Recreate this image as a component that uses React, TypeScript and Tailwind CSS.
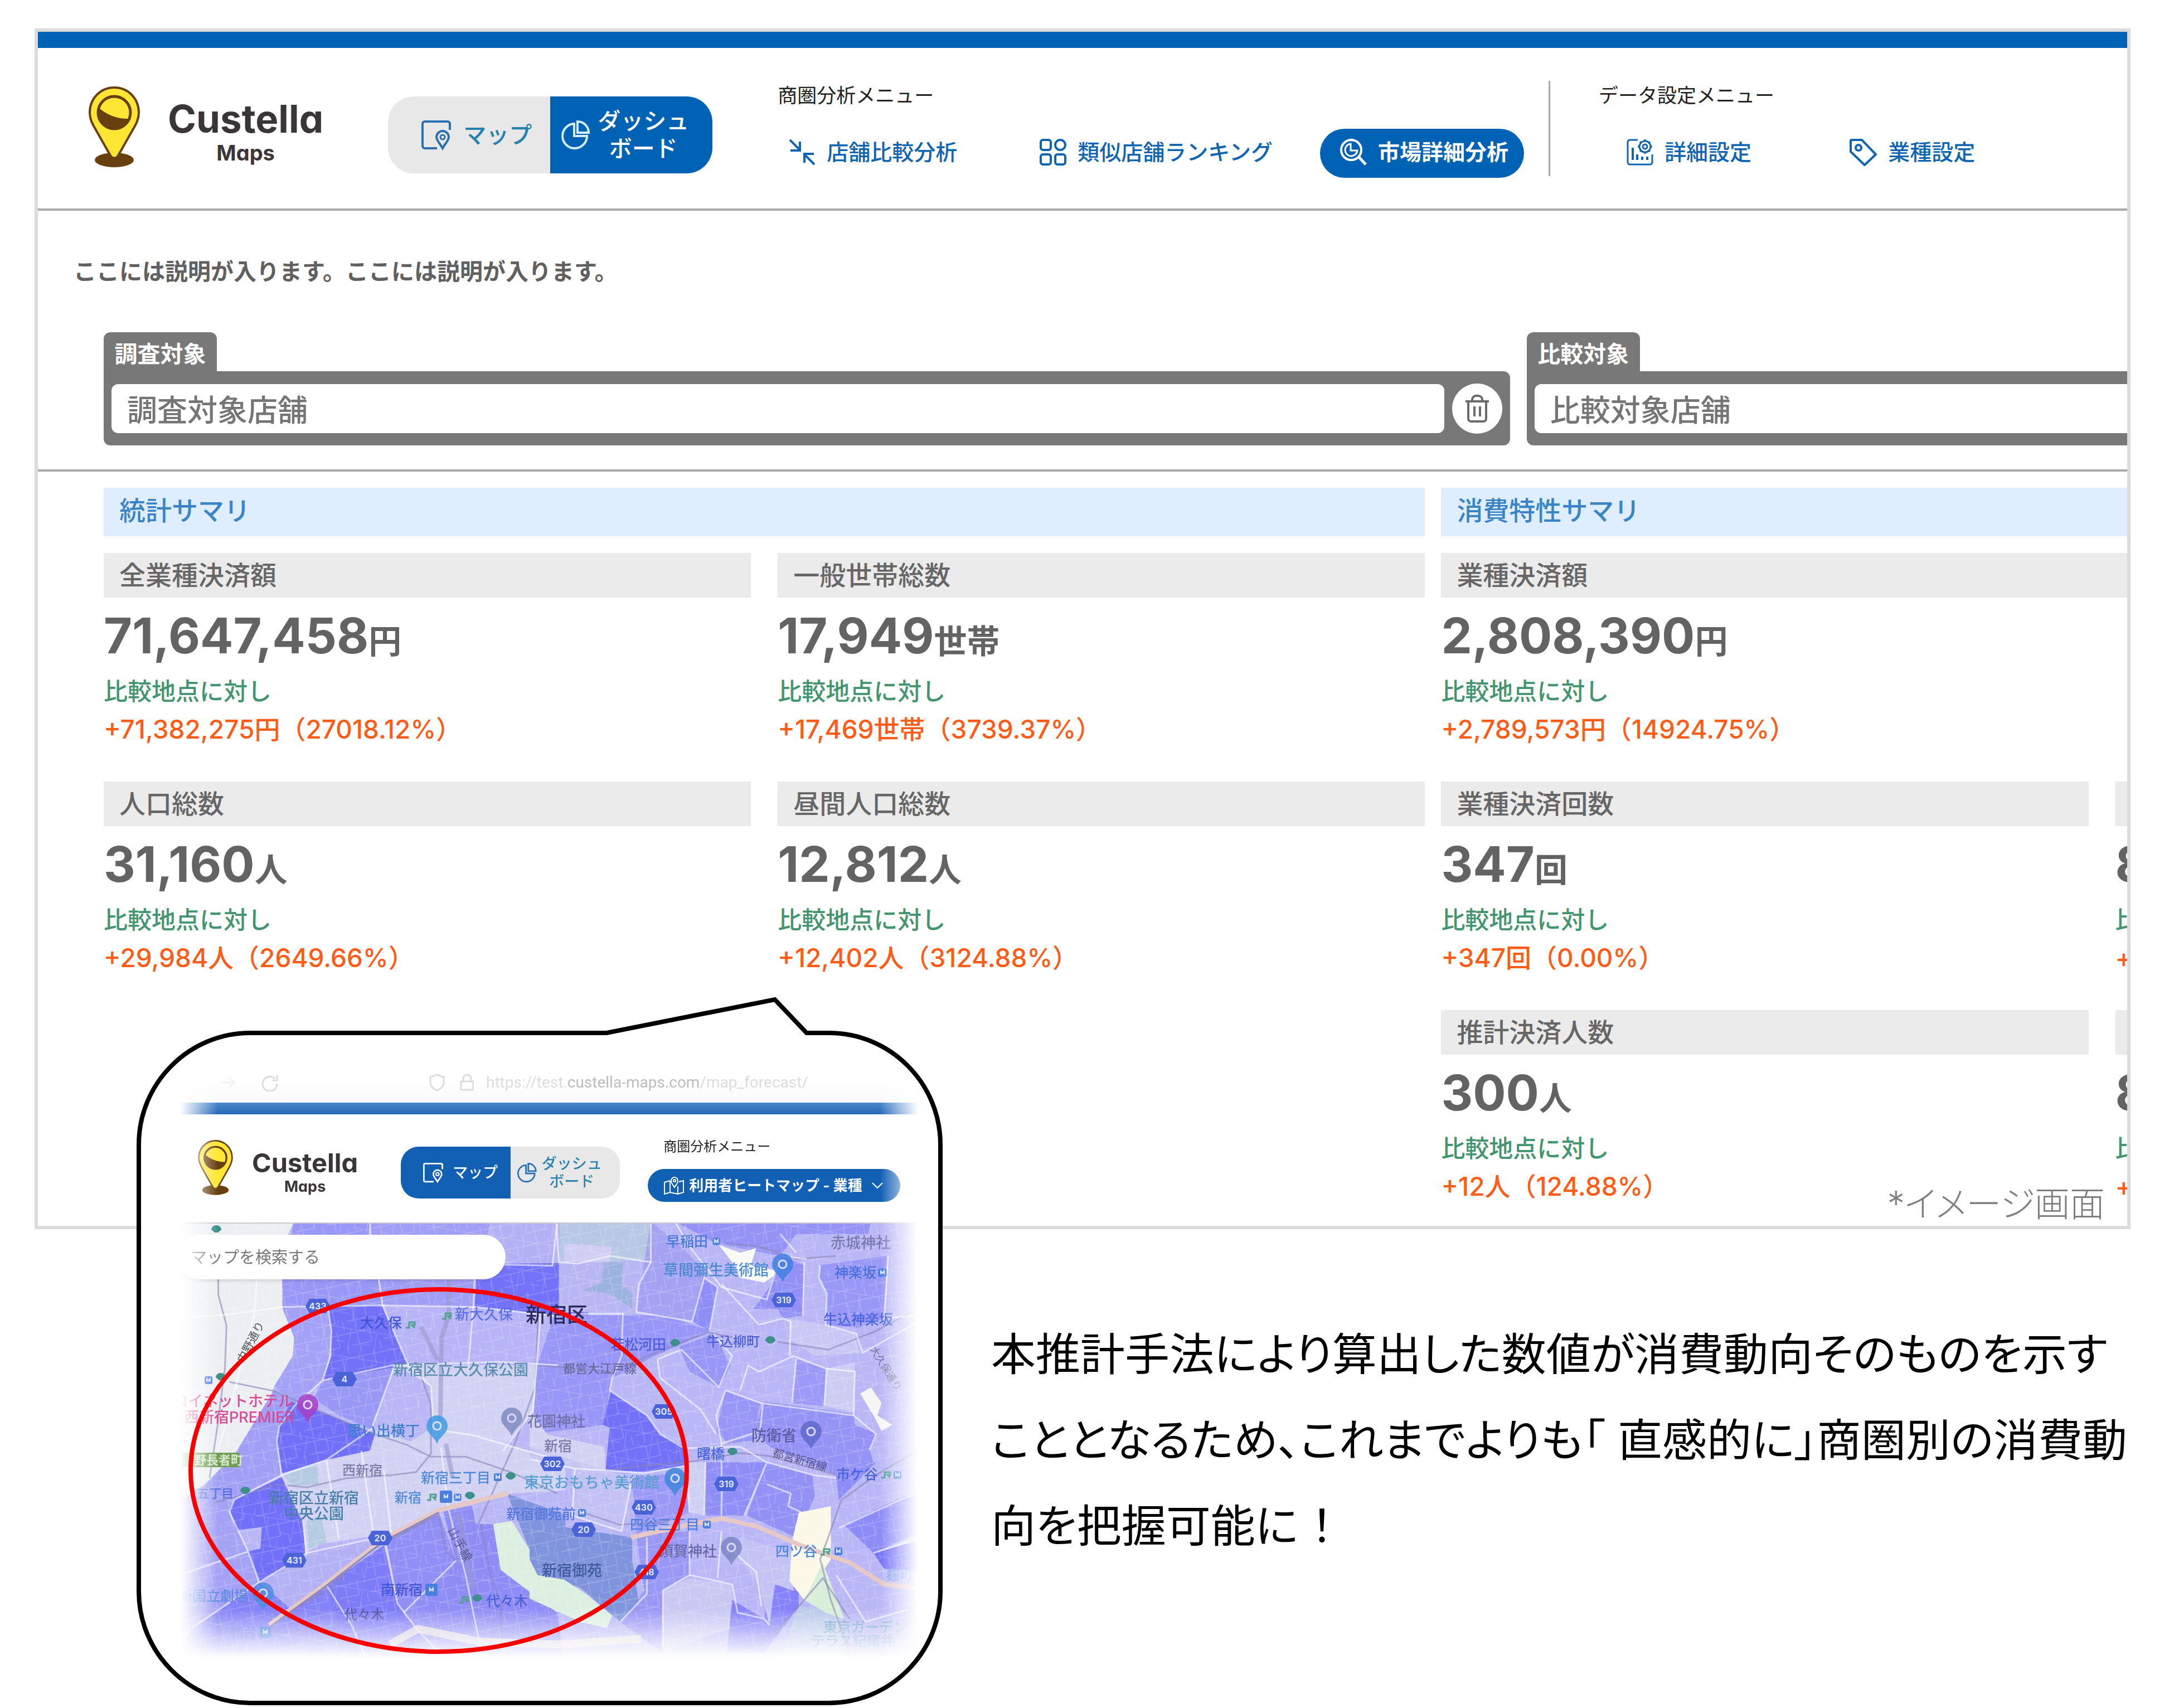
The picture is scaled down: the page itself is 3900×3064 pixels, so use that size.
import type { ReactNode } from "react";

type Metric = {
  title: string;
  value: string;
  unit: string;
  diff: string;
  wide?: boolean;
};

const statistics: Metric[] = [
  { title: "全業種決済額", value: "71,647,458", unit: "円", diff: "+71,382,275円（27018.12%）" },
  { title: "一般世帯総数", value: "17,949", unit: "世帯", diff: "+17,469世帯（3739.37%）" },
  { title: "人口総数", value: "31,160", unit: "人", diff: "+29,984人（2649.66%）" },
  { title: "昼間人口総数", value: "12,812", unit: "人", diff: "+12,402人（3124.88%）" },
];

const consumption: Metric[] = [
  { title: "業種決済額", value: "2,808,390", unit: "円", diff: "+2,789,573円（14924.75%）", wide: true },
  { title: "業種決済回数", value: "347", unit: "回", diff: "+347回（0.00%）" },
  { title: "", value: "8", unit: "", diff: "+" },
  { title: "推計決済人数", value: "300", unit: "人", diff: "+12人（124.88%）" },
  { title: "", value: "8", unit: "", diff: "+" },
];

function LogoPin({ className }: { className: string }) {
  return (
    <svg viewBox="0 0 92 147" className={className} aria-hidden="true">
      <ellipse cx="46" cy="132" rx="35" ry="13" fill="#68400f" />
      <path
        d="M46 2C21 2 2 22 2 47c0 12 5 21 11 31l26 46c3 6 11 6 14 0l26-46c6-10 11-19 11-31C90 22 71 2 46 2z"
        fill="#ffe634"
        stroke="#68400f"
        strokeWidth="4"
      />
      <circle cx="46" cy="47" r="29" fill="#ffe634" stroke="#68400f" strokeWidth="5" />
      <path d="M18 38c14 13 34 21 56 20-5 11-15 19-28 19-17 0-29-13-29-29z" fill="#68400f" />
    </svg>
  );
}

function MapIcon({ className }: { className: string }) {
  return (
    <svg viewBox="0 0 53 53" fill="none" stroke="currentColor" className={className} aria-hidden="true">
      <path d="M51 17V6a4 4 0 0 0-4-4H6a4 4 0 0 0-4 4v40a4 4 0 0 0 4 4h22" strokeWidth="4" />
      <path d="M38 50c-4-8-11-14-11-20a11 11 0 0 1 22 0c0 6-7 12-11 20z" strokeWidth="4" />
      <circle cx="38" cy="30" r="4" strokeWidth="3" />
    </svg>
  );
}

function PieIcon({ className }: { className: string }) {
  return (
    <svg viewBox="0 0 53 53" fill="none" stroke="currentColor" strokeWidth="4" className={className} aria-hidden="true">
      <path d="M23 6a22 22 0 1 0 23 22H23z" />
      <path d="M29 2a20 20 0 0 1 20 20H29z" />
    </svg>
  );
}

function CompareIcon() {
  return (
    <svg viewBox="0 0 48 48" fill="none" stroke="currentColor" strokeWidth="4" className="size-12" aria-hidden="true">
      <path d="M2 2l18 18M20 5v16H3M46 46L28 28M28 43V27h17" />
    </svg>
  );
}

function TilesIcon() {
  return (
    <svg viewBox="0 0 48 48" fill="none" stroke="currentColor" strokeWidth="4" className="size-12" aria-hidden="true">
      <rect x="2" y="2" width="18" height="18" rx="4" />
      <circle cx="37" cy="11" r="9" />
      <rect x="2" y="28" width="18" height="18" rx="4" />
      <rect x="28" y="28" width="18" height="18" rx="4" />
    </svg>
  );
}

function SearchPieIcon() {
  return (
    <svg viewBox="0 0 48 48" fill="none" stroke="currentColor" strokeWidth="4" className="size-12" aria-hidden="true">
      <circle cx="20" cy="20" r="18" />
      <path d="M34 33l12 13" strokeWidth="5" />
      <path d="M19 9v12h12a11 11 0 1 1-12-12z" strokeWidth="3" />
    </svg>
  );
}

function DetailIcon() {
  return (
    <svg viewBox="0 0 48 48" fill="none" stroke="currentColor" strokeWidth="3" className="size-12" aria-hidden="true">
      <path d="M20 2H6a4 4 0 0 0-4 4v36a4 4 0 0 0 4 4h36a4 4 0 0 0 4-4V28" />
      <path d="M11 16v22M19 28v10M28 32v6M37 32v6" strokeWidth="4" />
      <circle cx="33" cy="14" r="10" />
      <circle cx="33" cy="14" r="4" />
      <path d="M33 1v4M33 23v4M20 14h4M42 14h4M24 5l3 3M39 20l3 3M42 5l-3 3M27 20l-3 3" />
    </svg>
  );
}

function TagIcon() {
  return (
    <svg viewBox="0 0 50 50" fill="none" stroke="currentColor" strokeWidth="4" strokeLinejoin="round" className="size-[50px]" aria-hidden="true">
      <path d="M3 5a2 2 0 0 1 2-2h18l25 26-20 19L3 24z" />
      <circle cx="17" cy="17" r="5" />
    </svg>
  );
}

function TrashIcon() {
  return (
    <svg viewBox="0 0 44 50" fill="none" stroke="currentColor" strokeWidth="4" className="h-[50px] w-11" aria-hidden="true">
      <path d="M1 12h42M6 12v31a5 5 0 0 0 5 5h22a5 5 0 0 0 5-5V12M13 12V9a7 7 0 0 1 7-7h4a7 7 0 0 1 7 7v3" />
      <path d="M17 21v18M27 21v18" />
    </svg>
  );
}

function FoldedMapIcon() {
  return (
    <svg viewBox="0 0 38 34" fill="none" stroke="currentColor" strokeWidth="2" className="h-[34px] w-[38px]" aria-hidden="true">
      <path d="M12 8L2 11v21l10-3 14 3 10-3V8l-8 2M12 8v21M26 18v14" />
      <path d="M20 20c-3-5-6-7-6-12a6 6 0 0 1 12 0c0 5-3 7-6 12z" />
      <circle cx="20" cy="8" r="2" />
    </svg>
  );
}

function NavItem({ icon, label, active }: { icon: ReactNode; label: string; active?: boolean }) {
  return (
    <a
      href="#"
      className={
        active
          ? "flex h-[88px] items-center gap-5 rounded-full bg-[#0062b4] pr-7 pb-1 pl-9 text-[39px] font-bold text-white"
          : "flex h-[88px] items-center gap-5 pb-1 text-[39px] font-medium text-[#0f65b2]"
      }
    >
      {icon}
      {label}
    </a>
  );
}

function MetricCard({ metric }: { metric: Metric }) {
  return (
    <div className={metric.wide ? "col-span-2" : ""}>
      <h3 className="h-20 bg-[#ebebeb] px-7 text-[47px] leading-[80px] font-medium text-[#666]">{metric.title}</h3>
      <p className="mt-5 flex h-24 items-baseline text-[88px] leading-[96px] font-bold text-[#636363]">
        {metric.value}
        <span className="text-[59px] leading-[60px]">{metric.unit}</span>
      </p>
      <p className="mt-[22px] text-[43px] leading-[60px] font-medium text-[#43956f]">比較地点に対し</p>
      <p className="mt-2 text-[46px] leading-[60px] font-medium text-[#fb5c17]">{metric.diff}</p>
    </div>
  );
}

function Summary({ title, metrics }: { title: string; metrics: Metric[] }) {
  return (
    <section className="shrink-0 basis-[65.3%]">
      <h2 className="h-[87px] bg-[#deeefe] px-7 text-[47px] leading-[82px] font-medium text-[#3a84c5]">{title}</h2>
      <div className="mt-[30px] grid grid-cols-2 gap-x-12 gap-y-16 whitespace-nowrap">
        {metrics.map((metric, i) => (
          <MetricCard key={i} metric={metric} />
        ))}
      </div>
    </section>
  );
}

function TargetBox({ id, tab, value, removable }: { id: string; tab: string; value: string; removable?: boolean }) {
  return (
    <div className="shrink-0 basis-[69.5%]">
      <label
        htmlFor={id}
        className="block h-[70px] w-[203px] rounded-t-xl bg-[#787878] text-center text-[41px] leading-[78px] font-bold text-white"
      >
        {tab}
      </label>
      <div className="flex h-[133px] items-center gap-3.5 rounded-xl rounded-tl-none bg-[#787878] px-3.5">
        <input
          id={id}
          type="text"
          defaultValue={value}
          className="h-[88px] min-w-0 flex-1 rounded-xl bg-white px-7 text-[54px] font-medium text-[#757575]"
        />
        {removable && (
          <button type="button" aria-label="削除" className="flex size-[90px] items-center justify-center rounded-full bg-white text-[#6a6a6a]">
            <TrashIcon />
          </button>
        )}
      </div>
    </div>
  );
}

// ---- map ----

const west: [string, string][] = [
  ["0,20 510,20 465,100 462,300 510,400 505,460 430,560 370,690 260,790 150,880 0,960", "#eceef1"],
  ["510,20 815,20 815,70 850,210 865,295 650,295 465,310 462,210", "#9a98f6"],
  ["815,20 1300,20 1240,210 1230,300 865,295 850,210", "#a09ef5"],
  ["1300,20 1570,20 1548,60 1548,160 1355,150", "#b3b1f6"],
  ["1245,160 1700,155 1690,340 1500,322 1235,300", "#7472f8"],
  ["645,295 865,295 968,490 625,540 660,460 655,370", "#7371f8"],
  ["465,310 645,300 660,380 655,460 625,540 515,620 430,560 505,460 510,400", "#a4a2f6"],
  ["865,295 1235,300 1505,330 1480,500 968,490", "#b7b5f6"],
  ["625,540 910,500 820,700 680,650 590,600", "#9a98f5"],
  ["910,490 1490,490 1470,640 1360,750 1600,800 1600,900 1380,910 1090,965 900,1040 620,1075 555,1105 545,990 460,850 560,810 640,800 815,770 835,710", "#d2d2f3"],
  ["940,500 1060,560 1070,690 980,740 830,700 900,520", "#b9b7f5"],
  ["265,790 430,570 500,610 450,690 440,740 455,850 270,930 130,900", "#a19ff5"],
  ["500,610 640,650 835,715 815,770 640,800 460,845 440,740 450,680", "#7270f8"],
  ["0,960 130,890 260,940 250,980 325,1100 370,1200 200,1300 0,1400", "#a4a2f5"],
  ["270,930 465,855 545,1000 555,1110 370,1200 325,1100 375,1090 380,1020 280,1030 250,960", "#7270f8"],
  ["370,1200 560,1105 870,1050 660,1200 500,1290 400,1240", "#b3b1f3"],
  ["100,1350 370,1200 500,1290 640,1210 760,1450 0,1500", "#8583f7"],
  ["640,1210 870,1080 925,1270 1000,1350 1000,1480 740,1480", "#7e7cf7"],
  ["875,1060 1090,970 1160,1130 990,1340 925,1270", "#918ff6"],
  ["1110,970 1225,950 1240,1010 1310,1010 1340,1160 1568,1300 1600,1500 1000,1500 990,1340 1160,1130", "#8f8df5"],
  ["470,850 600,810 610,880 500,885", "#b4cbe2"],
  ["560,1000 620,990 640,1070 570,1090", "#b4cbe2"],
  ["1365,910 1600,980 1600,1230 1480,1190 1460,1100", "#8094dd"],
  ["1310,1010 1385,1000 1460,1100 1480,1195 1568,1210 1568,1300 1340,1160", "#dcefe0"],
];

const east: [string, string][] = [
  ["115,20 455,20 440,140 300,150 180,150 115,150", "#b7c8e4"],
  ["130,90 310,100 300,150 130,150", "#cfcdf3"],
  ["110,150 410,150 400,310 110,310", "#b9b7f3"],
  ["280,150 350,150 345,220 385,250 385,300 300,250 200,240 270,215", "#9db3df"],
  ["455,20 540,80 640,160 655,200 610,340 400,305", "#a5a2f3"],
  ["545,20 1280,20 1270,60 1000,60 940,130 700,90", "#9593f6"],
  ["90,320 510,320 680,370 470,450 310,520 300,560 280,670 10,700 30,480", "#9896f6"],
  ["0,495 22,495 15,640 65,700 280,740 285,815 170,810 0,780", "#d2d2f3"],
  ["305,562 440,640 490,700 580,740 590,800 430,820 285,815 300,680 275,670", "#7371f8"],
  ["710,95 790,120 850,105 830,160 940,180 880,215 790,200 760,150", "#fafaf5"],
  ["840,300 900,230 940,130 1030,160 1025,320 950,330 930,300", "#9391f6"],
  ["655,200 705,230 675,370 610,340", "#8f8df6"],
  ["1090,160 1340,130 1330,330 1230,360 1110,350 1115,250 1085,200", "#9a98f6"],
  ["970,330 1110,350 1220,380 1240,440 1070,450 980,400", "#c9c8f5"],
  ["560,420 690,380 755,480 710,550 600,500", "#9997f5"],
  ["735,560 865,600 840,720 745,730 700,690", "#9896f6"],
  ["875,595 1215,635 1220,670 1305,700 1275,750 1290,790 1150,830 900,740 845,690", "#9593f6"],
  ["1000,460 1110,490 1105,610 985,600", "#9c9af6"],
  ["1115,490 1220,470 1215,630 1105,610", "#cccdf3"],
  ["1240,570 1280,550 1320,600 1305,640 1360,670 1320,690 1290,640", "#f5f5f3"],
  ["660,790 890,790 805,960 655,960", "#8f8df6"],
  ["890,790 1060,830 1070,900 1000,1030 815,960", "#9391f6"],
  ["590,790 660,790 655,960 600,950", "#cfcff4"],
  ["0,780 170,810 160,960 345,1010 385,840 285,815 0,740", "#c8c7f4"],
  ["160,810 385,840 345,1010 160,960", "#c2c1f4"],
  ["385,840 580,820 600,950 400,1020", "#9b99f5"],
  ["1150,830 1300,790 1160,910", "#8e8cf6"],
  ["1180,990 1400,900 1500,880 1500,1000 1290,1080", "#8d8bf6"],
  ["1290,1080 1500,1030 1500,1140 1330,1130", "#7472f8"],
  ["400,1020 600,1010 600,1150 500,1200 500,1400 340,1300 430,1200", "#9a98f5"],
  ["500,1200 600,1160 760,1180 750,1320 500,1400", "#c9c8f3"],
  ["760,1230 880,1290 900,1180 1010,1190 1010,1250 880,1400 740,1400", "#8583f7"],
  ["790,1030 990,1080 990,1200 920,1180 900,1310 860,1180 770,1080", "#c4c3f4"],
  ["1010,950 1130,930 1130,1100 1030,1230 975,1170 985,1040", "#fbf8e8"],
  ["1010,1250 1170,1260 1200,1500 900,1500", "#bcc9ea"],
  ["1030,1230 1100,1110 1180,1290 1110,1270", "#d8eed8"],
  ["0,980 385,1030 385,1100 410,1240 340,1300 190,1190 0,1160", "#8094dd"],
  ["0,1100 30,1150 130,1165 210,1210 310,1280 290,1320 190,1300 0,1225", "#dcefe0"],
];

const westRoads = [
  "M0 340L240 325 465 300 865 295 1235 300 1568 330",
  "M360 210L350 320 300 480 250 640 200 780",
  "M645 295L660 380 655 460 625 540 515 620 450 690 440 740 460 850 545 1000 560 1110",
  "M850 210L865 295 968 490 1060 560 1070 700",
  "M625 540L910 490 1330 480 1568 490",
  "M910 500L820 700 640 800 460 850 270 930 250 970 325 1100 370 1200",
  "M0 1190L325 1100M100 1350L370 1200 560 1105 870 1050",
  "M640 1210L740 1340 800 1450M875 1060L925 1270 1000 1350 1080 1420",
  "M1235 210L1230 300 1210 490M1500 330L1470 640 1350 770",
  "M1100 760L1130 960 1200 1180 1260 1420M1160 1130L950 1300",
  "M640 800L690 1060M780 770L830 1050M870 830L900 1040",
  "M815 20L815 150M1240 160L1548 165 1568 20",
  "M1070 700L1230 720 1568 800",
];

const eastRoads = [
  "M100 20L110 150 180 155 300 130 455 150 455 20",
  "M455 150L410 220 400 310 510 325 610 340 655 200 705 230 675 370",
  "M95 320L220 315 350 315 345 450 310 520 300 560",
  "M480 460L570 430 710 550 760 450 690 380M480 460L490 520 640 620 700 700",
  "M300 560L440 640 490 700 580 745 790 740 890 790 1060 830 1150 840",
  "M735 560L865 600 1215 640 1300 700 1275 750M735 560L700 640 720 730 865 690 875 600",
  "M790 560L820 480 860 500 990 450 1110 490 1220 500 1215 640",
  "M1000 460L985 600M1115 490L1105 610M720 220L860 350 950 330 980 340 975 450",
  "M1030 150L1025 320M1090 160L1085 200 1115 250 1110 350 1230 380",
  "M545 20L600 100 720 230 890 270 940 130 1040 140M1345 130L1330 330 1450 320",
  "M1000 120L940 60M1225 380L1250 440 1480 330",
  "M660 790L655 960M720 730L720 960M590 820L600 950M890 790L805 960",
  "M890 860L980 890 970 930 1020 950M385 840L345 1010 160 960 170 810",
  "M440 1030L440 1210 340 1300M600 1010L600 1150 500 1200 500 1380M720 1010L705 1160",
  "M600 1150L760 1180 780 1270 880 1290 900 1310M770 1080L850 1140 870 1250",
  "M1160 1000L1390 910 1480 880M1290 1080L1470 1030M1150 1150L1260 1300 1420 1260",
  "M0 780L170 810 285 815 430 825 590 800",
];

const rails = [
  "M205 210L205 260 238 360 232 500 200 700 170 860",
  "M250 545L430 575 640 650 830 715 960 750 1060 790 1200 790 1380 840 1568 910",
  "M190 940L280 920 440 880 560 890 720 860 900 850 1000 840 1060 780 1060 620 1000 480",
  "M1490 340L1480 560 1400 740 1250 1010",
  "M500 1290L660 1220 780 1110 900 1060 1090 980 1120 1100 1160 1130",
  "M1260 1010L1300 1180 1340 1260 1345 1400",
];

const eastRails = [
  "M30 480L300 500 560 410 670 375 760 390",
  "M740 90L860 100 1000 140 1150 130",
  "M930 405L1120 430 1300 370 1430 310",
  "M280 815L430 800 590 790 790 760 900 770 1150 830",
  "M200 950L340 990 520 980",
  "M1480 740L1300 830 1170 910 1120 1030 1090 1100 1130 1230 1200 1400",
  "M880 1370L1010 1250 1100 1160 1200 1290",
];

// x, baseline y, font size, colour, text
const labels: [number, number, number, string, string][] = [
  [646, 2382, 25, "#4257d6", "大久保"],
  [816, 2367, 26, "#5f6fe6", "新大久保"],
  [943, 2372, 37, "#2b2b5e", "新宿区"],
  [705, 2467, 27, "#5b8fb0", "新宿区立大久保公園"],
  [623, 2576, 26, "#3d80cc", "思い出横丁"],
  [310, 2523, 27, "#d84a90", "ロイネットホテル"],
  [330, 2552, 27, "#d84a90", "西新宿PREMIER"],
  [614, 2646, 24, "#7d7da5", "西新宿"],
  [755, 2660, 25, "#4f8ad8", "新宿三丁目"],
  [708, 2695, 24, "#4f8ad8", "新宿"],
  [482, 2697, 27, "#477fa8", "新宿区立新宿"],
  [509, 2725, 27, "#477fa8", "中央公園"],
  [353, 2687, 22, "#5572e0", "五丁目"],
  [320, 2872, 25, "#5a8be0", "新国立劇場"],
  [413, 2937, 24, "#6f7ee8", "初台"],
  [683, 2861, 25, "#4257d6", "南新宿"],
  [617, 2905, 24, "#5454a4", "代々木"],
  [872, 2881, 25, "#4b62d8", "代々木"],
  [946, 2559, 26, "#7272a8", "花園神社"],
  [976, 2603, 25, "#7a7aa8", "新宿"],
  [940, 2669, 27, "#5a9fd0", "東京おもちゃ美術館"],
  [908, 2725, 25, "#5577e0", "新宿御苑前"],
  [972, 2827, 27, "#3f5a9a", "新宿御苑"],
  [1130, 2744, 25, "#4f80e0", "四谷三丁目"],
  [1182, 2792, 26, "#6a6aa8", "須賀神社"],
  [1095, 2421, 25, "#4a5fd8", "若松河田"],
  [1010, 2463, 22, "#6a6aa0", "都営大江戸線"],
  [1267, 2415, 24, "#4a5fd8", "牛込柳町"],
  [1195, 2236, 25, "#4a7ad8", "早稲田"],
  [1190, 2288, 27, "#4a8ad0", "草間彌生美術館"],
  [1490, 2239, 27, "#7a7ab0", "赤城神社"],
  [1497, 2292, 25, "#4a70dd", "神楽坂"],
  [1477, 2376, 25, "#4a66dd", "牛込神楽坂"],
  [1348, 2585, 27, "#5a5aa0", "防衛省"],
  [1250, 2617, 25, "#4a66dd", "曙橋"],
  [1500, 2654, 25, "#4a66dd", "市ケ谷"],
  [1391, 2792, 25, "#4f8ad8", "四ツ谷"],
  [1590, 2834, 24, "#7aa0e8", "麹町"],
  [1477, 2928, 25, "#74aacb", "東京ガーデン"],
  [1455, 2953, 25, "#74aacb", "テラス紀尾井"],
];

const badges: [number, number, string][] = [
  [570, 2343, "433"],
  [618, 2474, "4"],
  [528, 2799, "431"],
  [682, 2759, "20"],
  [991, 2626, "302"],
  [1047, 2744, "20"],
  [1155, 2704, "430"],
  [1160, 2820, "418"],
  [1191, 2532, "305"],
  [1406, 2332, "319"],
  [1303, 2662, "319"],
];

const pins: [number, number, string][] = [
  [552, 2522, "#a63fc4"],
  [784, 2560, "#3f9be0"],
  [918, 2546, "#7f8bc0"],
  [1404, 2270, "#3f7fe0"],
  [1455, 2570, "#5f68cc"],
  [1211, 2654, "#3f86dc"],
  [1312, 2778, "#7f86c4"],
  [472, 2860, "#4f8ee0"],
];

const stations: [number, number][] = [
  [388, 2206],
  [396, 2471],
  [440, 2675],
  [916, 2649],
  [843, 2684],
  [856, 2868],
  [1211, 2410],
  [1382, 2405],
  [1314, 2605],
];

const metroMarks: [number, number, number][] = [
  [374, 2476, 14],
  [1285, 2227, 13],
  [1583, 2283, 15],
  [893, 2650, 14],
  [800, 2685, 22],
  [821, 2686, 13],
  [774, 2852, 22],
  [476, 2928, 20],
  [1044, 2714, 14],
  [1268, 2735, 14],
  [1504, 2783, 14],
  [1610, 2646, 14],
];

const jrMarks: [number, number][] = [
  [736, 2377],
  [801, 2361],
  [774, 2686],
  [832, 2870],
  [1480, 2784],
  [1589, 2646],
];

function HeatMap() {
  return (
    <svg viewBox="310 2195 1350 795" className="block h-auto w-full" role="img" aria-label="新宿区">
      <defs>
        <pattern id="streets" width="58" height="44" patternUnits="userSpaceOnUse" patternTransform="rotate(-12)">
          <path d="M0 6H58M0 28H36M14 6V44M36 28V0M50 28V44" stroke="#ffffff" strokeWidth="2" strokeOpacity="0.16" fill="none" />
        </pattern>
        <pattern id="blocks" width="47" height="51" patternUnits="userSpaceOnUse" patternTransform="rotate(9)">
          <path d="M0 12H47M8 12V51M30 0V12M30 36H47" stroke="#ffffff" strokeWidth="2" strokeOpacity="0.12" fill="none" />
        </pattern>
      </defs>
      <rect x="310" y="2195" width="1350" height="795" fill="#b9b7f6" />
      <g transform="translate(300 2180) scale(.4464 .5485)">
        {west.map(([points, fill]) => (
          <polygon key={points} points={points} fill={fill} />
        ))}
      </g>
      <g transform="translate(950 2180) scale(.4783 .5612)">
        {east.map(([points, fill]) => (
          <polygon key={points} points={points} fill={fill} />
        ))}
      </g>
      <rect x="310" y="2195" width="1350" height="795" fill="url(#streets)" />
      <rect x="310" y="2195" width="1350" height="795" fill="url(#blocks)" />

      <g fill="none" stroke="#8a86b8" strokeWidth="3" strokeOpacity="0.6">
        <g transform="translate(300 2180) scale(.4464 .5485)">
          {rails.map((d) => (
            <path key={d} d={d} vectorEffect="non-scaling-stroke" />
          ))}
        </g>
        <g transform="translate(950 2180) scale(.4783 .5612)">
          {eastRails.map((d) => (
            <path key={d} d={d} vectorEffect="non-scaling-stroke" />
          ))}
        </g>
      </g>
      <path d="M805 2290V2360L792 2400 790 2550M755 2380L785 2440M800 2590L812 2650M822 2715L835 2790 850 2850" fill="none" stroke="#9a97cc" strokeWidth="8" strokeOpacity="0.6" />

      <g fill="none" stroke="#ffffff" strokeWidth="3" strokeOpacity="0.6">
        <g transform="translate(300 2180) scale(.4464 .5485)">
          {westRoads.map((d) => (
            <path key={d} d={d} vectorEffect="non-scaling-stroke" />
          ))}
        </g>
        <g transform="translate(950 2180) scale(.4783 .5612)">
          {eastRoads.map((d) => (
            <path key={d} d={d} vectorEffect="non-scaling-stroke" />
          ))}
        </g>
      </g>
      <path d="M483 2915L581 2844 688 2761 787 2709 912 2679M1132 2758L1232 2736 1294 2724 1357 2738 1443 2775 1524 2803 1586 2842 1660 2850" fill="none" stroke="#e6c9c6" strokeWidth="8" />
      <path d="M483 2919L581 2848 688 2765 787 2713" fill="none" stroke="#8f8ab4" strokeWidth="3" />
      <path d="M700 2950L750 2922 860 2945 1000 2950 1150 2940" fill="none" stroke="#f6ecd9" strokeWidth="14" strokeOpacity="0.7" />

      {stations.map(([x, y]) => (
        <path key={x} d={`M${x - 9} ${y}a9 8 0 0 1 18 0l-6 5h-6z`} fill="#3d8f8a" />
      ))}
      {metroMarks.map(([x, y, size]) => (
        <g key={x}>
          <rect x={x - size / 2} y={y - size / 2} width={size} height={size} rx="3" fill="#4a7fe0" />
          <path d={`M${x - 3} ${y + 3}v-6l3 4 3-4v6`} fill="none" stroke="#dfe6ff" strokeWidth="2" />
        </g>
      ))}
      {jrMarks.map(([x, y]) => (
        <path key={x} d={`M${x - 8} ${y + 5}h6v-10h10v5h-5l5 5`} fill="none" stroke="#4fa08c" strokeWidth="3" />
      ))}
      {pins.map(([x, y, fill]) => (
        <g key={x}>
          <path d={`M${x} ${y + 30}c-5-14-19-18-19-32a19 19 0 0 1 38 0c0 14-14 18-19 32z`} fill={fill} fillOpacity="0.85" />
          <circle cx={x} cy={y - 2} r="7" fill="none" stroke="#dcdcfa" strokeWidth="3" />
        </g>
      ))}
      {badges.map(([x, y, text]) => (
        <g key={`${x}-${text}`}>
          <path d={`M${x - 22} ${y}l7-13h30l7 13-7 13h-30z`} fill="#4a63d8" />
          <text x={x} y={y + 6} fontSize="16" fontWeight="700" textAnchor="middle" fill="#dfe4ff">
            {text}
          </text>
        </g>
      ))}
      <rect x="325" y="2606" width="105" height="26" fill="#6f9d54" />
      <text x="348" y="2627" fontSize="22" fontWeight="700" fill="#d8e8cc">野長者町</text>
      {labels.map(([x, y, size, fill, text]) => (
        <text key={`${x}-${y}`} x={x} y={y} fontSize={size} fill={fill} fontWeight="500">
          {text}
        </text>
      ))}
      <text x="437" y="2446" fontSize="20" fill="#555" transform="rotate(-62 437 2446)">中野通り</text>
      <text x="803" y="2745" fontSize="22" fill="#5a5a90" transform="rotate(62 803 2745)">山手線</text>
      <text x="1385" y="2612" fontSize="20" fill="#55558a" transform="rotate(16 1385 2612)">都営新宿線</text>
      <text x="1560" y="2420" fontSize="18" fill="#77779a" transform="rotate(58 1560 2420)">大久保通り</text>
    </svg>
  );
}

function Callout() {
  return (
    <figure className="relative z-10 h-[1271px] w-[1446px] shrink-0">
      <svg viewBox="0 0 1446 1271" className="absolute inset-0 size-full" aria-hidden="true">
        <path
          d="M204 65H843L1145 5 1202 65H1242C1352 65 1442 155 1442 265V1067C1442 1177 1352 1267 1242 1267H204C94 1267 4 1177 4 1067V265C4 155 94 65 204 65Z"
          fill="#fff"
          stroke="#000"
          strokeWidth="8"
        />
      </svg>

      <div className="relative ml-[65px] w-[1350px] pt-[102px]">
        <div className="[mask-image:linear-gradient(to_right,transparent_1%,black_6%,black_94%,transparent_99%)]">
          <div className="flex h-[88px] items-center bg-linear-to-b from-transparent from-60% to-[#f8f8fa] pt-4 pl-[86px] text-[#dcdcdc]">
            <svg viewBox="0 0 110 32" fill="none" stroke="currentColor" strokeWidth="2" className="h-8 w-[110px]" aria-hidden="true">
              <path d="M2 16h22M15 7l9 9-9 9" stroke="#efefef" />
              <path d="M97 9a13 13 0 1 0 4 9M101 3v9h-9" strokeWidth="3" />
            </svg>
            <svg viewBox="0 0 82 32" fill="none" stroke="currentColor" strokeWidth="3" className="ml-[262px] h-8 w-[82px]" aria-hidden="true">
              <path d="M16 2l12 4v10c0 7-6 12-12 14C10 28 4 23 4 16V6z" />
              <path d="M59 14h22v15H59zM63 14V9a7 7 0 0 1 14 0v5" />
            </svg>
            <span className="ml-[22px] font-[Roboto,sans-serif] text-[28px]">
              https://test.<span className="text-[#bcbcbc]">custella-maps.com</span>/map_forecast/
            </span>
          </div>
          <div className="h-[21px] bg-linear-to-b from-[#4b88cb] to-[#2569b6]" />

          <div className="flex h-[196px] items-start border-b-2 border-[#c9c9d2] bg-white pt-10 pl-[45px]">
            <LogoPin className="mt-1.5 h-[100px] w-[63px]" />
            <p className="mt-6 ml-[34px] text-center font-bold text-[#3a3536] [font-feature-settings:'cv11']">
              <span className="block text-[47px] leading-[46px]">Custella</span>
              <span className="mt-1.5 block text-[27px] leading-[27px]">Maps</span>
            </p>
            <div className="mt-[18px] ml-[77px] flex h-[93px] w-[393px] overflow-hidden rounded-[32px] text-[27px] leading-8 font-medium">
              <button type="button" className="flex w-1/2 items-center gap-[17px] bg-[#1260b3] pl-10 text-white">
                <MapIcon className="size-9" />
                マップ
              </button>
              <button type="button" className="flex w-1/2 items-center gap-2 bg-[#e8e8e8] pl-3 text-[#2a83b0]">
                <PieIcon className="size-9 text-[#2a70b8]" />
                <span>
                  ダッシュ
                  <br />
                  ボード
                </span>
              </button>
            </div>
            <div className="ml-[50px]">
              <p className="pl-7 text-2xl leading-9 text-[#222]">商圏分析メニュー</p>
              <button type="button" className="mt-[22px] flex h-[59px] w-[453px] items-center gap-2 rounded-full bg-[#1260b3] pl-7 text-[26px] font-bold whitespace-nowrap text-white">
                <FoldedMapIcon />
                利用者ヒートマップ - 業種
                <svg viewBox="0 0 22 12" fill="none" stroke="currentColor" strokeWidth="2" className="ml-2 h-3 w-[22px]" aria-hidden="true">
                  <path d="M2 1l9 9 9-9" />
                </svg>
              </button>
            </div>
          </div>

          <div className="relative [mask-image:linear-gradient(to_bottom,black_87%,transparent_98%)]">
            <HeatMap />
            <input
              type="search"
              aria-label="マップを検索する"
              placeholder="マップを検索する"
              className="absolute top-5 left-2 h-20 w-[589px] rounded-full bg-white pl-6 text-[29px] text-[#777] shadow-md placeholder:text-[#777]"
            />
          </div>
        </div>
      </div>

      <svg viewBox="0 0 898 658" className="absolute top-[521px] left-[93px] h-[658px] w-[898px]" aria-hidden="true">
        <ellipse cx="449" cy="329" rx="445" ry="325" fill="none" stroke="#f70000" strokeWidth="8" />
      </svg>
    </figure>
  );
}

export default function App() {
  return (
    <main className="min-h-screen overflow-hidden bg-white pt-[51px] font-[Inter,'Noto_Sans_CJK_JP',sans-serif]">
      <div className="relative mr-[78px] ml-[62px] overflow-hidden border-6 border-[#dcdcdc] bg-white">
        <div className="h-[29px] bg-[#0062b4]" />

        <header className="flex h-[292px] items-start border-b-4 border-[#a9a9a9] pt-[59px] pl-[91px] whitespace-nowrap">
          <LogoPin className="mt-2.5 h-[147px] w-[92px] shrink-0" />
          <p className="mt-[34px] ml-[50px] text-center font-bold text-[#3a3536] [font-feature-settings:'cv11']">
            <span className="block text-[69px] leading-[68px]">Custella</span>
            <span className="mt-2 block text-[38px] leading-[38px]">Maps</span>
          </p>

          <div className="mt-7 ml-[116px] flex h-[138px] w-[582px] shrink-0 overflow-hidden rounded-[46px] text-[41px] leading-[49px] font-medium">
            <button type="button" className="flex w-1/2 items-center gap-[22px] bg-[#e8e8e8] pl-[60px] text-[#2483ad]">
              <MapIcon className="size-[53px] text-[#2a70b3]" />
              マップ
            </button>
            <button type="button" className="flex w-1/2 items-center gap-3 bg-[#0062b4] pl-5 text-white">
              <PieIcon className="size-[53px] text-[#d6ecff]" />
              <span>
                ダッシュ
                <br />
                ボード
              </span>
            </button>
          </div>

          <nav className="ml-[117px]">
            <p className="text-[35px] leading-[52px] text-[#222]">商圏分析メニュー</p>
            <div className="mt-[34px] flex pl-5">
              <NavItem icon={<CompareIcon />} label="店舗比較分析" />
              <div className="mr-[85px] ml-[148px]">
                <NavItem icon={<TilesIcon />} label="類似店舗ランキング" />
              </div>
              <NavItem icon={<SearchPieIcon />} label="市場詳細分析" active />
            </div>
          </nav>

          <div className="ml-11 h-[171px] w-[3px] bg-[#a9a9a9]" />

          <nav className="ml-[87px]">
            <p className="text-[35px] leading-[52px] text-[#222]">データ設定メニュー</p>
            <div className="mt-[34px] flex gap-[175px] pl-[50px]">
              <NavItem icon={<DetailIcon />} label="詳細設定" />
              <NavItem icon={<TagIcon />} label="業種設定" />
            </div>
          </nav>
        </header>

        <p className="mt-[79px] pl-16 text-[41px] leading-[60px] font-bold text-[#606060]">
          ここには説明が入ります。ここには説明が入ります。
        </p>

        <div className="mt-[79px] flex gap-[30px] border-b-4 border-[#a9a9a9] pb-[43px] pl-[118px]">
          <TargetBox id="survey" tab="調査対象" value="調査対象店舗" removable />
          <TargetBox id="compare" tab="比較対象" value="比較対象店舗" />
        </div>

        <div className="flex gap-[29px] pt-[29px] pb-[41px] pl-[118px]">
          <Summary title="統計サマリ" metrics={statistics} />
          <Summary title="消費特性サマリ" metrics={consumption} />
        </div>

        <p className="absolute right-10 bottom-0 text-[63px] leading-[80px] font-light text-[#7f7f7f] [font-feature-settings:'palt']">
          *イメージ画面
        </p>
      </div>

      <div className="-mt-[417px] ml-[245px] flex items-start">
        <Callout />
        <p className="mt-[564px] ml-[87px] text-[80px] leading-[154px] whitespace-nowrap text-black [font-feature-settings:'palt']">
          本推計手法により算出した数値が消費動向そのものを示す
          <br />
          こととなるため、これまでよりも「 直感的に」商圏別の消費動
          <br />
          向を把握可能に ！
        </p>
      </div>
    </main>
  );
}
